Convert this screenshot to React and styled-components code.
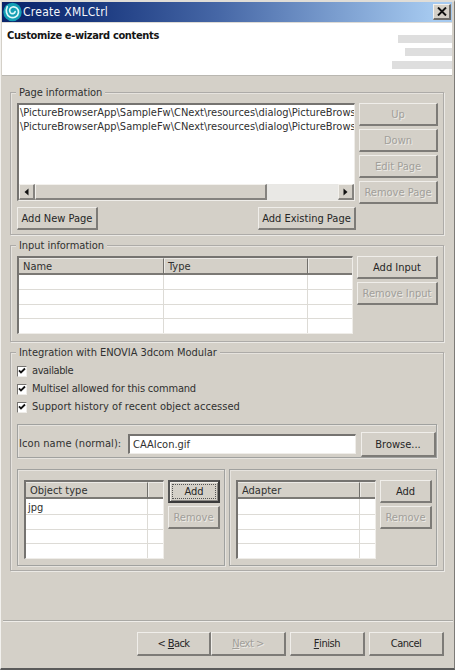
import React from "react";
import styled, { createGlobalStyle, css } from "styled-components";

const face = "#d4d0c8";

const Global = createGlobalStyle`
  *, *::before, *::after { box-sizing: border-box; }
  html, body { margin: 0; padding: 0; background: ${face}; overflow: hidden; }
  body { font-family: "DejaVu Sans Condensed", "DejaVu Sans", sans-serif; font-stretch: condensed; font-size: 11px; line-height: 14px; color: #303030; }
`;

const Window = styled.main`
  width: 455px; height: 670px; display: flex; flex-direction: column;
  background: ${face};
  border: solid; border-width: 2px 1px 2px 1px;
  border-color: #e0ddd7 #7d7b77 #5a5a5a #f2f1ee;
  padding: 0 1px 0 2px;
`;
const TitleBar = styled.header`
  flex: none; height: 20px; margin: 0 1px 0 -1px; display: flex; align-items: center; padding: 0 1px 0 1px;
  background: linear-gradient(90deg, #0a246a 0%, #17357c 18%, #4667a6 48%, #7c9fd0 75%, #a6caf0 96%);
  svg { flex: none; }
`;
const Title = styled.h1`
  margin: 0 auto 0 1px; font-size: 12px; font-weight: 400; line-height: 16px; color: #f4f6fa; letter-spacing: ${p => p.$ls || 0}px; white-space: nowrap;
`;
const Close = styled.button`
  width: 18px; height: 16px; padding: 0; display: grid; place-items: center; background: ${face};
  border: solid; border-width: 1px 2px 2px 1px; border-color: #f4f2ed #6e6c68 #6e6c68 #f4f2ed;
`;
const Banner = styled.section`
  flex: none; height: 54px; margin: 0 1px 0 -1px; display: flex; justify-content: space-between; background: #fff;
  border-top: 1px solid #dedbd5; border-bottom: 1px solid #b9b7b1;
`;
const BannerTitle = styled.h2`
  margin: 6px 0 0 5px; font-size: 11px; font-weight: 700; line-height: 14px; color: #151515; letter-spacing: ${p => p.$ls || 0}px; white-space: nowrap;
`;
const Stripes = styled.div`
  display: flex; flex-direction: column; align-items: flex-end; gap: 5px; padding-top: 12px;
`;
const Stripe = styled.i`
  height: 8px; width: ${p => p.$w}px; background: #dedede;
`;
const Body = styled.div`
  flex: 1; display: flex; flex-direction: column; gap: 10px; padding: 16px 8px 0 7px;
`;
const Group = styled.section`
  position: relative; flex: none; height: ${p => p.$h}px; width: 434px; padding: ${p => p.$pad};
  border: 1px solid #adaba8; box-shadow: inset 1px 1px #e6e3de, 1px 1px #ebe9e5;
`;
const Legend = styled.h3`
  position: absolute; left: 5px; top: -8px; margin: 0; padding: 0 3px; background: ${face};
  font-size: 11px; font-weight: 400; line-height: 15px; letter-spacing: ${p => p.$ls || 0}px; white-space: nowrap;
`;
const Row = styled.div`
  display: flex; align-items: flex-start; gap: ${p => p.$gap || 0}px; margin-top: ${p => p.$mt || 0}px;
  justify-content: ${p => p.$between ? "space-between" : "flex-start"}; width: ${p => p.$w ? p.$w + "px" : "auto"};
`;
const Stack = styled.div`
  display: flex; flex-direction: column; gap: ${p => p.$gap}px;
`;
const Button = styled.button`
  flex: none; width: ${p => p.$w}px; height: ${p => p.$h || 23}px; padding: 1px 0 0; display: flex; align-items: center; justify-content: center;
  font: inherit; letter-spacing: ${p => p.$ls || 0}px; white-space: pre; color: #262626; background: ${face};
  border: solid; border-width: 1px 2px 2px 1px; border-color: #f0eeea #7d7b77 #7d7b77 #f0eeea;
  &:disabled { color: #a19f9a; text-shadow: 1px 1px #eceae6; }
  ${p => p.$focus && css`
    border-width: 2px; border-color: #555 #3a3a3a #3a3a3a #555; outline: 1px dotted #555; outline-offset: -5px;
    box-shadow: inset 1px 1px #f0eeea, inset -1px -1px #8a8884;
  `}
`;
const sunken = css`
  border: solid; border-width: 2px 1px 1px 2px; border-color: #757370 #efede9 #efede9 #757370;
`;
const ListBox = styled.div`
  ${sunken} width: 338px; height: 98px; background: #fff; display: flex; flex-direction: column;
`;
const Lines = styled.div`
  flex: 1; padding: 1px 0 0 1px; overflow: hidden;
`;
const Line = styled.div`
  height: 13.6px; line-height: 14px; white-space: nowrap; letter-spacing: ${p => p.$ls || 0}px;
`;
const ScrollBar = styled.div`
  flex: none; height: 16px; display: flex; background: #e9e8e5;
`;
const raised = css`
  background: ${face}; border: solid; border-width: 1px 2px 2px 1px; border-color: #f3f1ed #85837f #85837f #f3f1ed;
`;
const Arrow = styled.div`
  ${raised} width: 16px; display: grid; place-items: center;
`;
const Thumb = styled.div`
  ${raised} width: 232px; margin-right: auto;
`;
const Grid = styled.div`
  ${sunken} flex: none; width: ${p => p.$w}px; height: ${p => p.$h}px; background: #fff;
  display: grid; grid-template-columns: ${p => p.$cols}; grid-template-rows: ${p => p.$rows};
`;
const HeadCell = styled.div`
  display: flex; align-items: center; padding: 1px 0 0 4px; background: ${face}; letter-spacing: ${p => p.$ls || 0}px; white-space: nowrap;
  border: solid; border-width: 1px 1px 2px 0; border-color: #eceae6 #716f6b #7b7975;
  &:nth-child(${p => p.$n}) { border-right: 0; }
  &:not(:first-child) { box-shadow: inset 1px 0 #eceae6; }
`;
const Cell = styled.div`
  display: flex; align-items: center; padding: 2px 0 0 2px; border: solid #dddbd6; border-width: 0 1px 1px 0;
  &:nth-child(${p => p.$n}n) { border-right: 0; }
  &:nth-last-child(-n + ${p => p.$n}) { border-bottom: 0; }
`;
const CheckRow = styled.label`
  display: flex; align-items: center; gap: 5px; height: 18px; letter-spacing: ${p => p.$ls || 0}px; white-space: nowrap;
`;
const CheckBox = styled.span`
  ${sunken} border-width: 1px; width: 10px; height: 11px; background: #fff; display: grid; place-items: center;
`;
const Panel = styled.div`
  flex: none; display: flex; align-items: flex-start; width: ${p => p.$w}px; height: ${p => p.$h}px; padding: ${p => p.$pad}; gap: ${p => p.$gap}px;
  border: 1px solid #a0a19f; box-shadow: inset 1px 1px #e6e3de, 1px 1px #e6e3de;
`;
const FieldLabel = styled.span`
  width: 110px; padding: 12px 0 0 1px; letter-spacing: ${p => p.$ls || 0}px; white-space: nowrap;
`;
const Field = styled.div`
  ${sunken} width: 228px; height: 20px; margin: 9px 5px 0 0; padding-left: 3px; background: #fff; line-height: 17px; letter-spacing: ${p => p.$ls || 0}px;
`;
const Footer = styled.footer`
  flex: none; height: 48px; display: flex; padding: 11px 8px 0 134px; border-top: 1px solid #aaa9a5; box-shadow: inset 0 1px #efede9;
`;
const Gap = styled.span`
  width: 4px;
`;

const Swirl = () => (
  <svg width="19" height="20" viewBox="0 0 18 19">
    <circle cx="9" cy="9.500" r="8.800" fill="#149fb4" />
    <path d="M4 4.500C2.400 8 3 12.300 6.500 14.200c3.500 1.700 7.700-.2 8.200-4.100C15.100 6.500 12 4 8.900 4.700 6.400 5.300 5.500 8.300 7 10.200c1.400 1.600 4.200 1 4.500-1" fill="none" stroke="#e0f8fa" strokeWidth="1.600" strokeLinecap="round" />
  </svg>
);
const Cross = () => (
  <svg width="10" height="9" viewBox="0 0 10 9"><path d="M1 .5 9 8.500M9 .5 1 8.500" stroke="#111" strokeWidth="1.900" /></svg>
);
const Triangle = ({ right }) => (
  <svg width="5" height="8" viewBox="0 0 5 8"><path d={right ? "M.5.5V7.500L4.500 4z" : "M4.500.5V7.500L.5 4z"} fill="#111" /></svg>
);
const Check = ({ children, ls }) => (
  <CheckRow $ls={ls}>
    <CheckBox><svg width="8" height="8" viewBox="0 0 8 8"><path d="M1 3.300 3 5.500 7 1.500" fill="none" stroke="#111" strokeWidth="1.800" /></svg></CheckBox>
    {children}
  </CheckRow>
);
const Table = ({ w, h, cols, rows, heads, ls, first }) => {
  const n = heads.length;
  return (
    <Grid $w={w} $h={h} $cols={cols} $rows={rows}>
      {heads.map((t, i) => <HeadCell key={t + i} $n={n} $ls={ls}>{t}</HeadCell>)}
      {Array.from({ length: 4 * n }, (_, i) => <Cell key={i} $n={n}>{i === 0 ? first : null}</Cell>)}
    </Grid>
  );
};

const path = "\\PictureBrowserApp\\SampleFw\\CNext\\resources\\dialog\\PictureBrows";

export default function App() {
  return (
    <Window>
      <Global />
      <TitleBar><Swirl /><Title $ls={0.28}>Create XMLCtrl</Title><Close aria-label="Close"><Cross /></Close></TitleBar>
      <Banner>
        <BannerTitle $ls={-0.35}>Customize e-wizard contents</BannerTitle>
        <Stripes><Stripe $w={54} /><Stripe $w={47} /><Stripe $w={60} /></Stripes>
      </Banner>
      <Body>
        <Group $h={143} $pad="10px 0 0 6px">
          <Legend $ls={-0.05}>Page information</Legend>
          <Row $gap={4}>
            <ListBox>
              <Lines><Line $ls={-0.01}>{path}</Line><Line $ls={-0.01}>{path}</Line></Lines>
              <ScrollBar><Arrow><Triangle /></Arrow><Thumb /><Arrow><Triangle right /></Arrow></ScrollBar>
            </ListBox>
            <Stack $gap={3}>
              {["Up", "Down", "Edit Page", "Remove Page"].map(t => <Button key={t} $w={79} disabled>{t}</Button>)}
            </Stack>
          </Row>
          <Row $between $w={339} $mt={3}>
            <Button $w={81}>Add New Page</Button>
            <Button $w={98}>Add Existing Page</Button>
          </Row>
        </Group>
        <Group $h={97} $pad="10px 0 0 6px">
          <Legend $ls={-0.05}>Input information</Legend>
          <Row $gap={4}>
            <Table w={336} h={78} cols="145px 144px 1fr" rows="17px 15px 15px 14px 1fr" heads={["Name", "Type", ""]} />
            <Stack $gap={3}><Button $w={81}>Add Input</Button><Button $w={81} disabled>Remove Input</Button></Stack>
          </Row>
        </Group>
        <Group $h={219} $pad="9px 0 0 6px">
          <Legend $ls={-0.05}>Integration with ENOVIA 3dcom Modular</Legend>
          <Check ls={-0.4}>available</Check>
          <Check ls={-0.18}>Multisel allowed for this command</Check>
          <Check ls={0.04}>Support history of recent object accessed</Check>
          <Row $mt={8}>
            <Panel $w={420} $h={34} $pad="0">
              <FieldLabel $ls={0.08}>Icon name (normal):</FieldLabel>
              <Field>CAAIcon.gif</Field>
              <Row $mt={7}><Button $w={75} $h={25}>Browse...</Button></Row>
            </Panel>
          </Row>
          <Row $mt={11} $gap={4}>
            <Panel $w={208} $h={97} $pad="10px 0 0 6px" $gap={4}>
              <Table w={140} h={79} cols="122px 1fr" rows="17px 16px 15px 14px 1fr" heads={["Object type", ""]} first="jpg" />
              <Stack $gap={3}><Button $w={52} $focus>Add</Button><Button $w={52} disabled>Remove</Button></Stack>
            </Panel>
            <Panel $w={208} $h={97} $pad="10px 0 0 6px" $gap={4}>
              <Table w={140} h={79} cols="122px 1fr" rows="17px 16px 15px 14px 1fr" heads={["Adapter", ""]} />
              <Stack $gap={3}><Button $w={52}>Add</Button><Button $w={52} disabled>Remove</Button></Stack>
            </Panel>
          </Row>
        </Group>
      </Body>
      <Footer>
        <Button $w={74} $h={24} $ls={-0.6}>&lt; <u>B</u>ack</Button>
        <Button $w={75} $h={24} $ls={-0.5} disabled><u>N</u>ext &gt;</Button>
        <Gap />
        <Button $w={75} $h={24} $ls={-0.4}><u>F</u>inish</Button>
        <Gap />
        <Button $w={75} $h={24} $ls={-0.5}>Cancel</Button>
      </Footer>
    </Window>
  );
}
